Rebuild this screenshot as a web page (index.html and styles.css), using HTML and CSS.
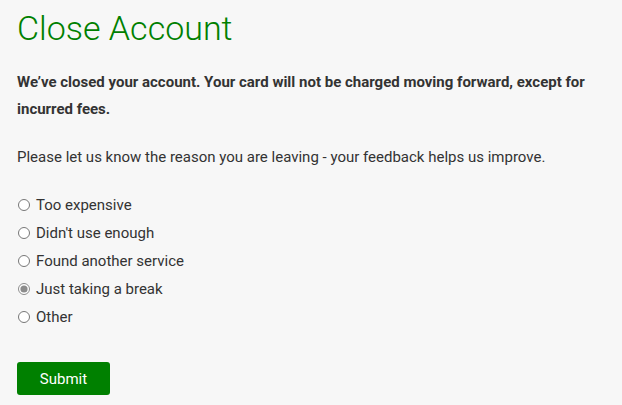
FILE: index.html
```html
<!DOCTYPE html>
<html>
<head>
<meta charset="utf-8">
<link rel="stylesheet" href="styles.css">
</head>
<body>
<main class="page">
  <h1 class="title">Close Account</h1>
  <p class="notice">We’ve closed your account. Your card will not be charged moving forward, except for incurred fees.</p>
  <p class="prompt">Please let us know the reason you are leaving - your feedback helps us improve.</p>
  <form class="reasons">
    <label class="option"><input type="radio" name="reason"> Too expensive</label>
    <label class="option"><input type="radio" name="reason"> Didn't use enough</label>
    <label class="option"><input type="radio" name="reason"> Found another service</label>
    <label class="option"><input type="radio" name="reason" checked> Just taking a break</label>
    <label class="option"><input type="radio" name="reason"> Other</label>
    <button type="button" class="submit">Submit</button>
  </form>
</main>
</body>
</html>
```
FILE: styles.css
```css
html, body {
  margin: 0;
  padding: 0;
  background: #f7f7f7;
}
body {
  font-family: Roboto, "Liberation Sans", sans-serif;
  color: #333;
  font-size: 15px;
}
.page {
  padding: 0 17px;
}
.title {
  margin: 0;
  padding-top: 8px;
  font-size: 34px;
  font-weight: 300;
  color: #008000;
  line-height: 40px;
}
.notice {
  margin: 21px 0 0;
  font-weight: 700;
  line-height: 27px;
}
.prompt {
  margin: 20px 0 0;
  line-height: 28px;
}
.reasons {
  display: flex;
  flex-direction: column;
  align-items: flex-start;
  margin-top: 20px;
}
.option {
  display: flex;
  align-items: center;
  height: 28px;
  gap: 6px;
}
.option input {
  margin: 0 0 0 1px;
  width: 12px;
  height: 12px;
  accent-color: #8c8c8c;
}
.submit {
  margin-top: 31px;
  width: 93px;
  height: 33px;
  background: #008000;
  color: #fff;
  border: none;
  border-radius: 3px;
  font-family: Roboto, sans-serif;
  font-size: 15px;
}
```
